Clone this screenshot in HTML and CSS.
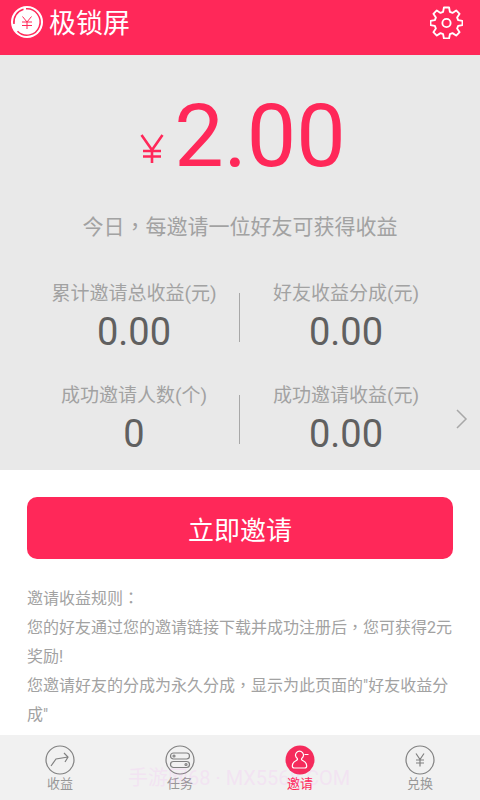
FILE: index.html
```html
<!DOCTYPE html>
<html lang="zh-CN">
<head>
<meta charset="utf-8">
<meta name="viewport" content="width=device-width, initial-scale=1">
<title>极锁屏</title>
<link rel="stylesheet" href="styles.css">
</head>
<body>
<header class="topbar">
  <svg class="logo" viewBox="0 0 32 32" aria-hidden="true">
    <circle cx="16" cy="16" r="16" fill="#fff"/>
    <path d="M12.500 3.300A13.200 13.200 0 0 0 3 18M6.500 25.200A13.200 13.200 0 1 0 15 2.800" fill="none" stroke="#ff2859" stroke-width="1.500"/>
    <path d="M11.500 10.500l4.500 5.500 4.500-5.500M11 16h10M11 19.500h10M16 16v7" fill="none" stroke="#ff2859" stroke-width="1"/>
  </svg>
  <h1 class="title">极锁屏</h1>
  <button class="settings" type="button" aria-label="设置">
    <svg viewBox="0 0 32 32" fill="none" stroke="#fff" stroke-width="1.800" stroke-linejoin="round">
      <path d="M13.500 1.500h5l.8 4.200 2.500 1 3.600-2.400 3.300 3.300-2.400 3.600 1 2.500 4.200.8v4l-4.200.8-1 2.500 2.400 3.600-3.300 3.300-3.600-2.400-2.500 1-.8 4.200h-5l-.8-4.200-2.500-1-3.600 2.400-3.300-3.300 2.400-3.600-1-2.500-4.200-.8v-4l4.200-.8 1-2.500-2.400-3.600 3.300-3.300 3.600 2.400 2.500-1z"/>
      <circle cx="16" cy="16.500" r="4"/>
    </svg>
  </button>
</header>

<main class="content">
  <section class="summary">
    <p class="amount">
      <svg class="yen" viewBox="0 0 24 32" role="img" aria-label="¥"><path d="M1.500 1l10.500 15L22.500 1M3 17h18M3 22.500h18M12 16v13" fill="none" stroke="#ff2859" stroke-width="2.600"/></svg>
      <span class="amount-value">2.00</span>
    </p>
    <p class="hint">今日<span class="mark" lang="zh-TW">，</span>每邀请一位好友可获得收益</p>
    <dl class="stats">
      <div class="stat"><dt>累计邀请总收益(元)</dt><dd>0.00</dd></div>
      <div class="stat"><dt>好友收益分成(元)</dt><dd>0.00</dd></div>
      <div class="stat"><dt>成功邀请人数(个)</dt><dd>0</dd></div>
      <div class="stat"><dt>成功邀请收益(元)</dt><dd>0.00</dd></div>
    </dl>
    <a class="more" href="#details" aria-label="查看详情">
      <svg viewBox="0 0 12 20"><path d="M1 1l9 9-9 9" fill="none" stroke="#a8a8a8" stroke-width="1.500"/></svg>
    </a>
  </section>

  <section class="invite">
    <button class="invite-button" type="button">立即邀请</button>
    <div class="rules">
      <p>邀请收益规则<span class="mark" lang="zh-TW">：</span></p>
      <p>您的好友通过您的邀请链接下载并成功注册后<span class="mark" lang="zh-TW">，</span>您可获得2元奖励!</p>
      <p>您邀请好友的分成为永久分成<span class="mark" lang="zh-TW">，</span>显示为此页面的"好友收益分成"</p>
    </div>
  </section>
</main>

<nav class="tabs">
  <a class="tab" href="#income">
    <svg viewBox="0 0 30 30"><circle cx="15" cy="15" r="14"/><path d="M6 21l5-7 12-2M19 8l4 4-3 5"/></svg>
    <span>收益</span>
  </a>
  <a class="tab" href="#tasks">
    <svg viewBox="0 0 30 30"><circle cx="15" cy="15" r="14"/><rect x="5.500" y="8" width="19" height="6" rx="3"/><rect x="5.500" y="16.500" width="19" height="6" rx="3"/><circle cx="9" cy="11" r="1"/><circle cx="21" cy="19.500" r="1"/></svg>
    <span>任务</span>
  </a>
  <a class="tab active" href="#invite" aria-current="page">
    <svg viewBox="0 0 30 30"><circle class="disc" cx="15" cy="15" r="14.500"/><path d="M12.300 13.500a4 4 0 1 1 4.400 0c-.5 1 0 1.500 1 2 3 1.500 4 3.500 4 5.500q0 2-2 2H9.300q-2 0-2-2c0-2 1-4 4-5.500 1-.5 1.500-1 1-2zM19.500 9.500h4"/></svg>
    <span>邀请</span>
  </a>
  <a class="tab" href="#exchange">
    <svg viewBox="0 0 30 30"><circle cx="15" cy="15" r="14"/><path d="M11 8.500l4 6 4-6M11 15h8M11 18h8M15 14.500v7"/></svg>
    <span>兑换</span>
  </a>
  <span class="watermark" aria-hidden="true">手游网68 · MX5568.COM</span>
</nav>
</body>
</html>
```
FILE: styles.css
```css
* {
  box-sizing: border-box;
}

body {
  margin: 0;
  min-height: 100vh;
  display: flex;
  flex-direction: column;
  background: #fff;
  color: #a2a2a2;
  font-family: Roboto, "Noto Sans CJK SC", sans-serif;
  text-spacing-trim: space-all;
}

h1, p, dl, dd {
  margin: 0;
}

svg {
  display: block;
}

button {
  border: 0;
  font-family: inherit;
}

.mark {
  font-family: "Noto Sans CJK TC", sans-serif;
  line-height: 1;
}

.topbar {
  display: flex;
  align-items: center;
  gap: 6px;
  padding: 0 17px 11px 11px;
  height: 55px;
  background: #ff2859;
  color: #fff;
}

.logo {
  width: 32px;
  height: 32px;
}

.title {
  padding-top: 3px;
  font-size: 27px;
  font-weight: 400;
  line-height: 40px;
}

.settings {
  margin-left: auto;
  padding: 0;
  background: none;
}

.settings svg {
  width: 33px;
  height: 33px;
}

.content {
  flex: 1;
}

.summary {
  position: relative;
  padding: 29px 28px 12px;
  background: #e9e9e9;
  text-align: center;
}

.amount {
  display: flex;
  justify-content: center;
  align-items: baseline;
  gap: 10px;
  padding-left: 6px;
  color: #ff2859;
}

.yen {
  width: 24px;
  height: 32px;
}

.amount-value {
  font-size: 88px;
  line-height: 104px;
}

.hint {
  margin-top: 23px;
  font-size: 21px;
  line-height: 32px;
}

.stats {
  display: grid;
  grid-template-columns: 1fr 1fr;
  row-gap: 26px;
  margin-top: 37px;
}

.stat {
  position: relative;
}

.stat:nth-child(odd)::after {
  content: "";
  position: absolute;
  top: 13px;
  right: 0;
  width: 1px;
  height: 49px;
  background: #a8a8a8;
}

.stat dt {
  font-size: 19px;
  line-height: 28px;
}

.stat dd {
  color: #606060;
  font-size: 38px;
  line-height: 48px;
}

.more {
  position: absolute;
  right: 12px;
  bottom: 41px;
}

.more svg {
  width: 12px;
  height: 20px;
}

.invite {
  padding: 27px 27px 6px;
}

.invite-button {
  display: block;
  width: 100%;
  height: 62px;
  border-radius: 10px;
  background: #ff2859;
  color: #fff;
  font-size: 26px;
}

.rules {
  margin-top: 25px;
  font-size: 16px;
  line-height: 29px;
}

.tabs {
  position: relative;
  flex: none;
  display: flex;
  height: 65px;
  background: #f1f1f1;
}

.tab {
  flex: 1;
  display: flex;
  flex-direction: column;
  align-items: center;
  padding-top: 10px;
  color: #989898;
  font-size: 13px;
  line-height: 18px;
  text-decoration: none;
}

.tab svg {
  width: 30px;
  height: 30px;
  fill: none;
  stroke: #808080;
  stroke-width: 1.2;
}

.tab.active {
  color: #ff2859;
}

.tab.active svg {
  stroke: #fff;
}

.tab .disc {
  fill: #f52b5c;
  stroke: none;
}

.watermark {
  position: absolute;
  left: 128px;
  bottom: 11px;
  color: #ff50ff;
  font-size: 20px;
  line-height: 22px;
  white-space: nowrap;
  opacity: 0.08;
  pointer-events: none;
}
```
